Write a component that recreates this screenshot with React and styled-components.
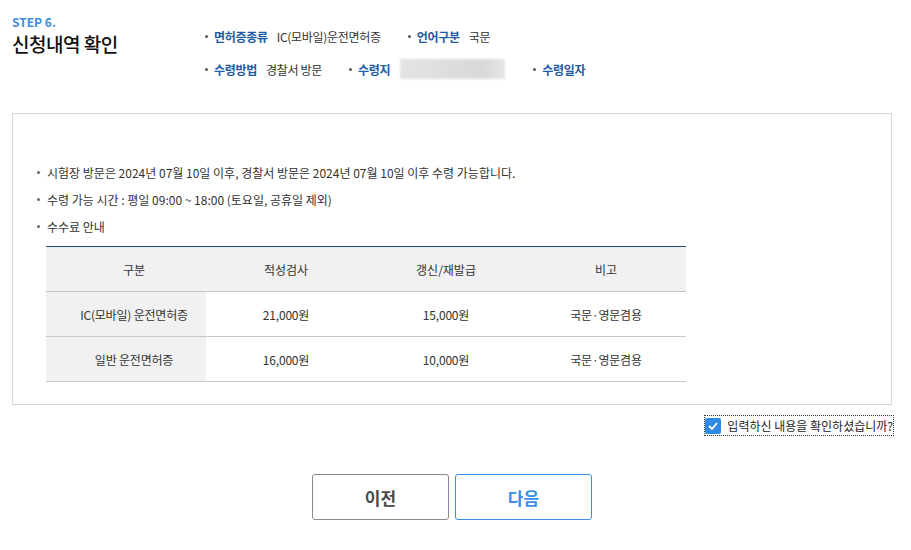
import React from 'react';
import styled, { createGlobalStyle } from 'styled-components';

const GlobalStyle = createGlobalStyle`
  body {
    margin: 0;
    background: #fff;
    font-family: 'Noto Sans CJK KR', 'Noto Sans', sans-serif;
    color: #333;
  }
`;

const Page = styled.div`
  width: 880px;
  padding: 0 0 0 12px;
`;

const Head = styled.div`
  display: flex;
  padding-top: 14px;
  height: 113px;
  box-sizing: border-box;
`;

const TitleBlock = styled.div`
  width: 193px;
`;

const Step = styled.div`
  color: #3b8de2;
  font-size: 12px;
  font-weight: 700;
  line-height: 16px;
`;

const Title = styled.h2`
  margin: 0;
  font-size: 19px;
  font-weight: 500;
  line-height: 28px;
  color: #111;
  letter-spacing: -0.5px;
`;

const InfoGrid = styled.div`
  display: flex;
  flex-direction: column;
  gap: 13px;
  padding-top: 12px;
`;

const InfoRow = styled.div`
  display: flex;
  align-items: center;
  height: 20px;
`;

const Info = styled.div`
  display: flex;
  align-items: center;
  font-size: 12px;
  margin-right: ${p => p.gap || 28}px;
  &::before {
    content: '';
    width: 3px;
    height: 3px;
    background: #555;
    border-radius: 50%;
    margin-right: 6px;
  }
`;

const Label = styled.span`
  color: #1d5ca3;
  font-weight: 700;
  margin-right: 9px;
  letter-spacing: -0.3px;
`;

const Value = styled.span`
  color: #333;
  letter-spacing: -0.3px;
`;

const Blurred = styled.span`
  display: inline-block;
  width: 105px;
  height: 20px;
  background: linear-gradient(90deg, #e4e4e4 0%, #dcdcdc 55%, #d9d9d9 80%, #e6e6e6 100%);
  filter: blur(1px);
  margin-left: 1px;
`;

const Box = styled.div`
  border: 1px solid #d8d8d8;
  padding: 45px 0 24px 22px;
  height: 292px;
  box-sizing: border-box;
`;

const Notes = styled.ul`
  list-style: none;
  margin: 0;
  padding: 0;
`;

const Note = styled.li`
  display: flex;
  align-items: center;
  font-size: 12px;
  height: 27px;
  color: #333;
  &::before {
    content: '';
    width: 3px;
    height: 3px;
    background: #666;
    border-radius: 50%;
    margin: 0 7px 0 2px;
  }
`;

const Table = styled.table`
  margin: 6px 0 0 11px;
  width: 640px;
  border-collapse: collapse;
  border-top: 1px solid #1b4c77;
  font-size: 12px;
  color: #333;
  table-layout: fixed;
`;

const Th = styled.th`
  background: #f1f1f1;
  font-weight: 400;
  height: 44px;
  border-bottom: 1px solid #c4c4c4;
  padding: ${p => (p.first ? '0 0 0 16px' : '0')};
`;

const Td = styled.td`
  text-align: center;
  height: 44px;
  border-bottom: 1px solid #c8c8c8;
  background: ${p => (p.shade ? '#f1f1f1' : '#fff')};
  padding: ${p => (p.shade ? '0 0 0 16px' : '0')};
  letter-spacing: -0.2px;
`;

const Confirm = styled.div`
  display: flex;
  justify-content: flex-end;
  padding-top: 11px;
`;

const CheckLabel = styled.label`
  display: flex;
  align-items: center;
  gap: 6px;
  font-size: 12px;
  color: #222;
  outline: 1px dotted #333;
  padding: 1px 0;
  margin-right: -1px;
`;

const Box16 = styled.span`
  width: 16px;
  height: 16px;
  background: #2f8ae6;
  border-radius: 2px;
  display: flex;
  align-items: center;
  justify-content: center;
`;

const Buttons = styled.div`
  display: flex;
  justify-content: center;
  gap: 6px;
  padding-top: 39px;
`;

const Button = styled.button`
  width: 137px;
  height: 46px;
  border-radius: 3px;
  background: #fff;
  font-family: inherit;
  font-size: 17px;
  font-weight: 700;
  border: 1px solid ${p => (p.primary ? '#3a8fe8' : '#8a8a8a')};
  color: ${p => (p.primary ? '#3a8fe8' : '#4a4a4a')};
  cursor: pointer;
`;

const rows = [
  ['IC(모바일) 운전면허증', '21,000원', '15,000원', '국문·영문겸용'],
  ['일반 운전면허증', '16,000원', '10,000원', '국문·영문겸용'],
];

export default function App() {
  return (
    <Page>
      <GlobalStyle />
      <Head>
        <TitleBlock>
          <Step>STEP 6.</Step>
          <Title>신청내역 확인</Title>
        </TitleBlock>
        <InfoGrid>
          <InfoRow>
            <Info gap={27}>
              <Label>면허증종류</Label>
              <Value>IC(모바일)운전면허증</Value>
            </Info>
            <Info>
              <Label>언어구분</Label>
              <Value>국문</Value>
            </Info>
          </InfoRow>
          <InfoRow>
            <Info gap={27}>
              <Label>수령방법</Label>
              <Value>경찰서 방문</Value>
            </Info>
            <Info gap={28}>
              <Label>수령지</Label>
              <Blurred />
            </Info>
            <Info>
              <Label>수령일자</Label>
            </Info>
          </InfoRow>
        </InfoGrid>
      </Head>

      <Box>
        <Notes>
          <Note>시험장 방문은 2024년 07월 10일 이후, 경찰서 방문은 2024년 07월 10일 이후 수령 가능합니다.</Note>
          <Note>수령 가능 시간 : 평일 09:00 ~ 18:00 (토요일, 공휴일 제외)</Note>
          <Note>수수료 안내</Note>
        </Notes>
        <Table>
          <thead>
            <tr>
              <Th first>구분</Th>
              <Th>적성검사</Th>
              <Th>갱신/재발급</Th>
              <Th>비고</Th>
            </tr>
          </thead>
          <tbody>
            {rows.map(r => (
              <tr key={r[0]}>
                <Td shade>{r[0]}</Td>
                <Td>{r[1]}</Td>
                <Td>{r[2]}</Td>
                <Td>{r[3]}</Td>
              </tr>
            ))}
          </tbody>
        </Table>
      </Box>

      <Confirm>
        <CheckLabel>
          <Box16>
            <svg width="10" height="8" viewBox="0 0 10 8">
              <path d="M1 4 L4 7 L9 1" fill="none" stroke="#fff" strokeWidth="1.8" />
            </svg>
          </Box16>
          입력하신 내용을 확인하셨습니까?
        </CheckLabel>
      </Confirm>

      <Buttons>
        <Button>이전</Button>
        <Button primary>다음</Button>
      </Buttons>
    </Page>
  );
}
